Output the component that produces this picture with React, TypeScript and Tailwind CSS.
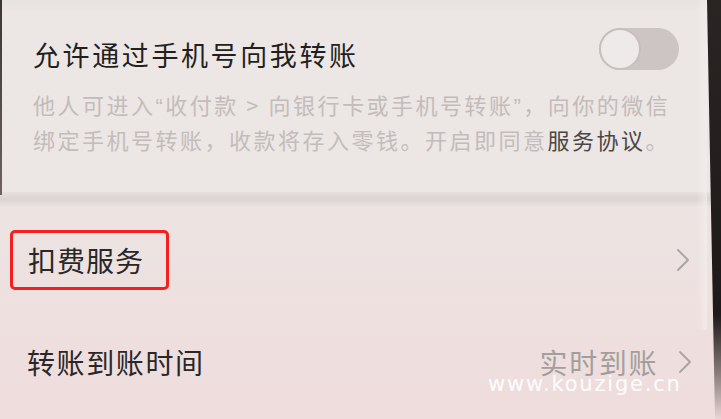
const cjk = { fontFamily: '"Noto Sans CJK SC", "Noto Sans", sans-serif' }
const latin = { fontFamily: '"Liberation Sans", "Noto Sans CJK SC", sans-serif' }

function Chevron() {
  return (
    <svg width="14" height="24" viewBox="0 0 14 24" fill="none">
      <path d="M2 2 L12 12 L2 22" stroke="#a9a3a3" strokeWidth="1.8" strokeLinecap="round" strokeLinejoin="round" />
    </svg>
  )
}

function Toggle() {
  return (
    <div className="w-[80px] h-[42px] rounded-full bg-[#ccc5c4] flex items-center">
      <div className="w-[42px] h-[42px] rounded-full bg-[#eeeae9] border-2 border-[#c6bfbe]" />
    </div>
  )
}

export default function App() {
  return (
    <div
      className="relative w-[721px] h-[419px] overflow-hidden bg-gradient-to-b from-[#e8e4e2] via-[#ece4e2] to-[#efdcdc]"
      style={cjk}
    >
      {/* Phone-number transfer switch */}
      <section className="h-[192px] pt-[28px] bg-gradient-to-b from-[#e6e2e0] via-[#ece7e5] via-[6%] to-[#ece6e4]">
        <div className="flex items-start justify-between pl-[33px] pr-[42px]">
          <h2 className="mt-[7px] text-[27px] leading-[40px] tracking-[2.6px] text-[#231f1f] font-normal whitespace-nowrap">
            允许通过手机号向我转账
          </h2>
          <Toggle />
        </div>
        <div className="mt-[13px] pl-[33px] text-[22px] leading-[32px] tracking-[2.5px] text-[#c3bcbb] whitespace-nowrap">
          <p>
            他人可进入<span style={latin}>“</span>收付款 &gt; 向银行卡或手机号转账<span style={latin}>”</span>，向你的微信
          </p>
          <p>
            绑定手机号转账，收款将存入零钱。开启即同意<span className="text-[#4a4646]">服务协议</span>。
          </p>
        </div>
      </section>

      {/* Group divider */}
      <div className="h-[14px] bg-gradient-to-b from-[#e6dfdd] via-[#dcd4d2] to-[#e9e1df]" />

      {/* Deduction service */}
      <div className="h-[108px] flex items-center justify-between pr-[31px]">
        <div className="ml-[10px] w-[159px] h-[60px] border-[3px] border-[#f41f1f] rounded-[5px] pl-[15px] flex items-center">
          <span className="text-[28px] leading-none tracking-[1px] text-[#2a2727] whitespace-nowrap">扣费服务</span>
        </div>
        <Chevron />
      </div>

      {/* Arrival time */}
      <div className="h-[96px] flex items-center justify-between pl-[27px] pr-[29px]">
        <span className="text-[28px] leading-none tracking-[1.6px] text-[#2a2727] whitespace-nowrap">转账到账时间</span>
        <div className="flex items-center gap-[20px]">
          <span className="text-[28px] leading-none tracking-[1.6px] text-[#a39e9e] whitespace-nowrap">实时到账</span>
          <Chevron />
        </div>
      </div>

      {/* Watermark */}
      <div
        className="absolute left-[488px] top-[374px] text-[21px] leading-[21px] tracking-[1.8px] text-white/90 whitespace-nowrap"
        style={{ fontFamily: '"DejaVu Sans", Roboto, sans-serif' }}
      >
        www.kouzige.cn
      </div>

      {/* Phone bezel edges */}
      <div className="absolute left-0 top-0 w-[2px] h-[195px] bg-gradient-to-b from-[#3b3534] to-[#6d6261]" />
      <div className="absolute right-0 top-0 w-[16px] h-full bg-gradient-to-b from-[#2a2423] via-[#1e1a19] via-[75%] to-[#e7d6d5] [clip-path:polygon(2px_0,100%_0,100%_100%,10px_100%)]" />
      <div className="absolute right-[14px] top-0 w-[10px] h-[330px] bg-gradient-to-r from-transparent to-[#f3efee]/70" />
    </div>
  )
}
